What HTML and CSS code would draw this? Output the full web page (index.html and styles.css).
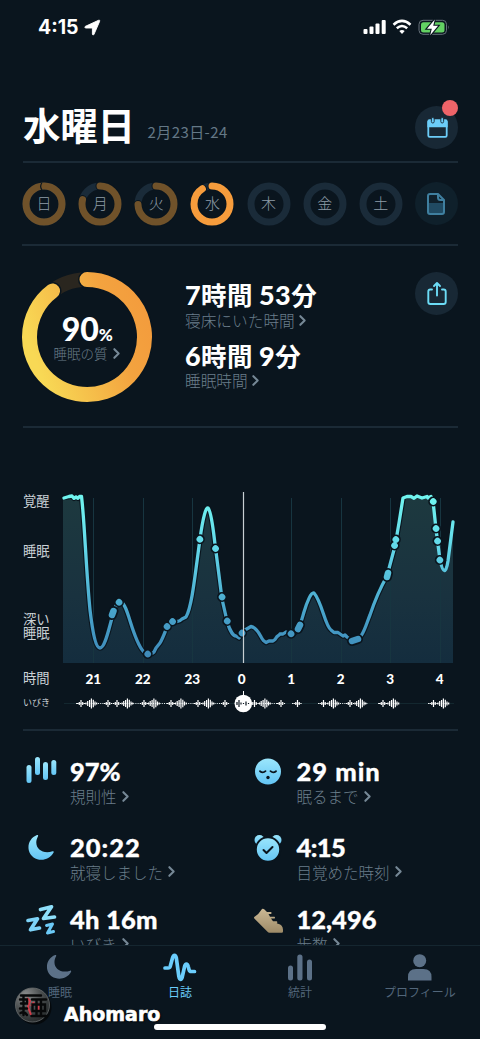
FILE: index.html
```html
<!DOCTYPE html>
<html lang="ja">
<head>
<meta charset="utf-8">
<title>睡眠日誌</title>
<link rel="stylesheet" href="styles.css">
</head>
<body>
<svg class="defs" width="0" height="0" aria-hidden="true">
  <defs>
    <linearGradient id="sky" x1="0" y1="0" x2="0" y2="1"><stop offset="0" stop-color="#9be6fc"/><stop offset="1" stop-color="#63c5f5"/></linearGradient>
    <linearGradient id="tan" x1="0" y1="0" x2="0" y2="1"><stop offset="0" stop-color="#cbb894"/><stop offset="1" stop-color="#9e8b68"/></linearGradient>
    <symbol id="chev" viewBox="0 0 8 12"><path d="M2 2l4 4-4 4" fill="none" stroke="#768896" stroke-width="1.9" stroke-linecap="round" stroke-linejoin="round"/></symbol>
    <symbol id="moon" viewBox="0 0 26 26"><path d="M9 0C2.600 2.500-.8 9 .9 15.700c2.600 10.300 18.500 13 24.700 1.800.5-1-.2-1.600-1-1.200C13 20 4.500 11.500 10 1.200 10.400.4 9.900-.3 9 0z"/></symbol>
  </defs>
</svg>
<div class="screen">
  <header class="status">
    <span class="clock">4:15</span>
    <svg class="loc" width="17" height="17" viewBox="0 0 17 17"><path d="M1.500 7.300L14.500 1.300c1-.4 1.500.1 1.100 1.100L10 15.300c-.5 1.100-1.600.8-1.600-.3V9H1.900C.7 9 .4 7.800 1.500 7.300z" fill="#fff" stroke="#fff" stroke-width=".9" stroke-linejoin="round"/></svg>
    <svg class="signal" width="88" height="20" viewBox="362 17 88 20">
      <g fill="#fff"><rect x="363.500" y="29" width="4" height="5" rx="1"/><rect x="369.500" y="26.500" width="4" height="7.500" rx="1"/><rect x="375.500" y="23.500" width="4" height="10.500" rx="1"/><rect x="381.700" y="20" width="4" height="14" rx="1"/></g>
      <g fill="none" stroke="#fff" stroke-width="2.500"><path d="M393.500 24.700q8.500-7.600 17 0"/><path d="M396.800 28.300q5.200-4.600 10.400 0"/></g>
      <path d="M399.300 31q2.700-2.200 5.400 0L402 34z" fill="#fff"/>
      <rect x="419" y="20.300" width="27.500" height="14" rx="4" fill="none" stroke="#66717a"/>
      <path d="M448 25.200v4.200q1.700-2.100 0-4.200" fill="#66717a"/>
      <rect x="421" y="22.200" width="23.500" height="10.200" rx="2.500" fill="#63d163"/>
      <path d="M434.800 19.500L427 28.700h4.800l-1.600 6.500 7.900-9.400h-4.900z" fill="#fff" stroke="#0a151e" stroke-width="2.200" paint-order="stroke"/>
    </svg>
  </header>

  <main class="content">
    <section class="title-row">
      <h1>水曜日</h1><span class="date">2月23日-24</span>
      <div class="round cal">
        <svg width="22" height="22" viewBox="425 116 22 22"><path d="M427.300 121.500h18.400v13q0 1.300-1.300 1.300h-15.800q-1.300 0-1.300-1.300z" fill="none" stroke="#6ccdf8" stroke-width="1.800"/><path d="M426.400 120.200q0-2 2-2h16.200q2 0 2 2v6h-20.200z" fill="#6ccdf8"/><g fill="#6ccdf8" stroke="#182835" stroke-width=".9"><rect x="430.400" y="116.500" width="2.800" height="5.500" rx="1.400"/><rect x="439.800" y="116.500" width="2.800" height="5.500" rx="1.400"/></g></svg>
        <i class="badge"></i>
      </div>
    </section>

    <section class="week">
      <div class="day past"><svg viewBox="0 0 44 44"><circle class="track" cx="22" cy="22" r="18"/><circle class="bar" cx="22" cy="22" r="18"/><path class="seam" d="M36 20q3.500-2.600 7-.2"/></svg><span>日</span></div>
      <div class="day past"><svg viewBox="0 0 44 44"><circle class="track" cx="22" cy="22" r="18"/><circle class="gap" pathLength="100" stroke-dasharray="79 100" cx="22" cy="22" r="18"/><circle class="bar" pathLength="100" stroke-dasharray="79 100" cx="22" cy="22" r="18"/></svg><span>月</span></div>
      <div class="day past"><svg viewBox="0 0 44 44"><circle class="track" cx="22" cy="22" r="18"/><circle class="gap" pathLength="100" stroke-dasharray="74.500 100" cx="22" cy="22" r="18"/><circle class="bar" pathLength="100" stroke-dasharray="74.500 100" cx="22" cy="22" r="18"/></svg><span>火</span></div>
      <div class="day now"><svg viewBox="0 0 44 44"><circle class="track" cx="22" cy="22" r="18"/><circle class="gap" pathLength="100" stroke-dasharray="91 100" cx="22" cy="22" r="18"/><circle class="bar" pathLength="100" stroke-dasharray="91 100" cx="22" cy="22" r="18"/></svg><span>水</span></div>
      <div class="day"><svg viewBox="0 0 44 44"><circle class="track" cx="22" cy="22" r="18"/></svg><span>木</span></div>
      <div class="day"><svg viewBox="0 0 44 44"><circle class="track" cx="22" cy="22" r="18"/></svg><span>金</span></div>
      <div class="day"><svg viewBox="0 0 44 44"><circle class="track" cx="22" cy="22" r="18"/></svg><span>土</span></div>
      <div class="round note"><svg width="20" height="24" viewBox="0 0 20 24"><path d="M2 11h16v9q0 2-2 2H4q-2 0-2-2z" fill="#204a62"/><path d="M4 2h8l6 6v12q0 2-2 2H4q-2 0-2-2V4q0-2 2-2zM12 2v3.500q0 2.500 2.500 2.500H18" fill="none" stroke="#3f7f9f" stroke-width="2" stroke-linejoin="round"/></svg></div>
    </section>

    <section class="summary">
      <div class="quality">
        <svg viewBox="0 0 132 132">
          <defs><linearGradient id="gold" x1="1" y1=".2" x2="0" y2=".55"><stop offset="0" stop-color="#f39c3d"/><stop offset=".3" stop-color="#f3a33f"/><stop offset="1" stop-color="#f8d955"/></linearGradient></defs>
          <circle cx="66" cy="66" r="57.500" fill="none" stroke="#2a261f" stroke-width="14.500"/>
          <path d="M66 8.500A57.500 57.500 0 1 1 31.500 20" fill="none" stroke="#0a151e" stroke-width="18" stroke-linecap="round"/>
          <path d="M66 8.500A57.500 57.500 0 1 1 31.500 20" fill="none" stroke="url(#gold)" stroke-width="15" stroke-linecap="round"/>
        </svg>
        <div class="q-text"><strong>90<small>%</small></strong><span>睡眠の質<svg class="chev"><use href="#chev"/></svg></span></div>
      </div>
      <div class="times">
        <strong><b>7</b>時間 <b>53</b>分</strong><span>寝床にいた時間<svg class="chev"><use href="#chev"/></svg></span>
        <strong><b>6</b>時間 <b>9</b>分</strong><span>睡眠時間<svg class="chev"><use href="#chev"/></svg></span>
      </div>
      <div class="round share"><svg width="24" height="28" viewBox="0 0 24 28"><path d="M7 9.500H5.300Q3.300 9.500 3.300 11.500v10.500q0 2 2 2h13.400q2 0 2-2V11.500q0-2-2-2H17M12 15.500V3.500M9 6l3-3 3 3" fill="none" stroke="#6cdcf6" stroke-width="1.900" stroke-linecap="round" stroke-linejoin="round"/></svg></div>
    </section>

    <section class="chart">
      <div class="levels"><span>覚醒</span><span>睡眠</span><span class="deep"><i>深い</i><i>睡眠</i></span></div>
      <svg class="plot" viewBox="62 488 396 176">
        <defs>
          <linearGradient id="area" gradientUnits="userSpaceOnUse" x1="0" y1="497" x2="0" y2="663"><stop offset="0" stop-color="#1d393f"/><stop offset=".6" stop-color="#19323f"/><stop offset="1" stop-color="#142d3e"/></linearGradient>
          <linearGradient id="line" gradientUnits="userSpaceOnUse" x1="0" y1="497" x2="0" y2="660"><stop offset="0" stop-color="#70f4ef"/><stop offset=".3" stop-color="#63d9ea"/><stop offset=".7" stop-color="#48a4cb"/><stop offset="1" stop-color="#3e88b8"/></linearGradient>
        </defs>
        <path fill="url(#area)" d="M63 498L69 496.500 81 497C84 515 86 570 90 610C93 635 96 648 100 648C105 648 109 628 112 618C115 607 117 601 121 602C128 604 132 638 143 651C147 656 154 655 157 649C160 640 163 640 167 627C173 619 178 622 186 616C192 607 195 575 200 539C203 517 206 507 209 508C212 512 214 538 215.500 548L222 599 227 621C230 632 234 637 239 638L245 629 251 626C258 627 261 642 268 642C278 640 277 634 286 632L292 634C299 632 301 622 304 612C307 602 311 592 315 594C323 602 325 632 333 632C340 631 345 637 352 641C363 640 365 627 370 615C375 600 380 592 387 576L395 546 399 523 404 497H432L436 529 440 560C443 574 446 574 448 561L453 522V663H63z"/>
        <g stroke="#173540" stroke-width="1"><path d="M93.500 498v165M143.500 498v165M192.500 498v165M291.500 498v165M341.500 498v165M390.500 498v165M440.500 498v165"/></g>
        <path fill="none" stroke="#0a151e" stroke-width="5.500" stroke-linejoin="round" d="M63 497.500L69 496.500 72 496 74 498.300 76 497 78 498.300 79.500 496.500H81.500C84.500 520 86 570 90 610C93 635 96 648 100 648C105 648 109 628 112 618C115 607 117 601 121 602C128 604 132 638 143 651C147 656 151 655 154 652L156 648 160 643C163 638 165 632 167 627C173 619 178 624 182 619L186 617C192 607 195 575 200 539C203 517 206 507 208 508C212 512 214 538 215.500 548L222 599 227 621C230 632 234 636 236 636L239 638L245 630 251 626.500C258 627 261 639 264 641L266 642.500 269 641 273 641 275 639.500C278 634 279 636 280 634L283 634 286 632 292 634C299 632 301 622 304 612C307 602 311 592 314 593C322 602 325 626 331 630L334 632.500H338L343 636 345 635 347 637 352 641C363 640 365 627 370 615C375 600 378 592 387 576L395 546 399 523 403 498"/>
        <path fill="none" stroke="url(#line)" stroke-width="3.300" stroke-linejoin="round" stroke-linecap="round" d="M64 498L69 496.500 72 496 74 498.300 76 497 78 498.300 79.500 496.500H81.500C84.500 520 86 570 90 610C93 635 96 648 100 648C105 648 109 628 112 618C115 607 117 601 121 602C128 604 132 638 143 651C147 656 151 655 154 652L156 648 160 643C163 638 165 632 167 627C173 619 178 624 182 619L186 617C192 607 195 575 200 539C203 517 206 507 208 508C212 512 214 538 215.500 548L222 599 227 621C230 632 234 636 236 636L239 638L245 630 251 626.500C258 627 261 639 264 641L266 642.500 269 641 273 641 275 639.500C278 634 279 636 280 634L283 634 286 632 292 634C299 632 301 622 304 612C307 602 311 592 314 593C322 602 325 626 331 630L334 632.500H338L343 636 345 635 347 637 352 641C363 640 365 627 370 615C375 600 378 592 387 576L395 546 399 523 403 498 407 496.500 411 496.500 414 498.300 417 496 422 498 427 496.500 428 498 431 496.500 433 501 436 529 437.500 541 440 560C443 574 446 574 448 561L453 522"/>
        <g fill="none" stroke-linecap="round">
          <path stroke="#0a151e" stroke-width="10" d="M112 615l1.500-4M119 602.300h.01M147.700 654h.01M167 626.500h.01M172.500 621.500h.01M199.800 539.300h.01M215.500 548.500h.01M222 597h.01M227.200 621h.01M242 633h.01M291 633.800h.01M298 629l2-4M352 641l6-2M387 577l1-4M394.500 545.500h.01M395.800 539.500h.01M433.200 501.500h.01M436 528.500h.01M437.500 541h.01M439.800 560h.01"/>
          <path stroke="url(#line)" stroke-width="6.500" d="M112 615l1.500-4M119 602.300l.1.100M147.700 654l.1.100M167 626.500l.1.100M172.500 621.500l.1.100M199.800 539.300l.1.100M215.500 548.500l.1.100M222 597l.1.100M227.200 621l.1.100M242 633l.1.100M291 633.800l.1.100M298 629l2-4M352 641l6-2M387 577l1-4M394.500 545.500l.1.100M395.800 539.500l.1.100M433.200 501.500l.1.100M436 528.500l.1.100M437.500 541l.1.100M439.800 560l.1.100"/>
        </g>
        <path d="M243.500 492v171" stroke="#c8cfd3" stroke-width="1.200"/>
      </svg>
      <span class="axis">時間</span>
      <div class="hours"><b>21</b><b>22</b><b>23</b><b>0</b><b>1</b><b>2</b><b>3</b><b>4</b></div>
      <span class="axis snore">いびき</span>
      <svg class="wave" viewBox="62 690 396 26">
        <defs>
          <path id="sm" d="M-3.500-.5v1M-1.700-1.500v3M0-3.500v7M1.700-1.500v3M3.500-.5v1" stroke-width="1.200"/>
          <path id="lg" d="M-5-1v2M-3.300-2.500v5M-1.400-3.500v7M.4-5v10M2.300-3.800v7.600M4-2v4M5.700-1v2" stroke-width="1.200"/>
        </defs>
        <path d="M64 703.500h390" stroke="#13272f"/>
        <g stroke="#e5e9eb" stroke-dasharray="1 1.200"><path d="M76 703.500h152M254 703.500h28M292 703.500h9M318 703.500h50M378 703.500h20M428 703.500h22"/></g>
        <g stroke="#fff">
          <use href="#sm" x="81" y="703.500"/><use href="#lg" x="91" y="703.500"/><use href="#sm" x="108" y="703.500"/><use href="#sm" x="117" y="703.500"/><use href="#lg" x="127" y="703.500"/><use href="#sm" x="144" y="703.500"/><use href="#lg" x="153.500" y="703.500"/><use href="#sm" x="171" y="703.500"/><use href="#lg" x="180.500" y="703.500"/><use href="#sm" x="198" y="703.500"/><use href="#lg" x="208" y="703.500"/><use href="#sm" x="225" y="703.500"/>
          <use href="#sm" x="254.500" y="703.500"/><use href="#lg" x="264.500" y="703.500"/><use href="#sm" x="281" y="703.500"/><use href="#sm" x="297.500" y="703.500"/><use href="#sm" x="323.500" y="703.500"/><use href="#lg" x="333" y="703.500"/><use href="#sm" x="350" y="703.500"/><use href="#lg" x="360" y="703.500"/><use href="#sm" x="383" y="703.500"/><use href="#lg" x="393" y="703.500"/><use href="#sm" x="433.500" y="703.500"/><use href="#lg" x="443" y="703.500"/>
        </g>
        <path d="M243.500 691v6" stroke="#fff"/><circle cx="243.300" cy="703.500" r="8.800" fill="#fff"/>
        <g stroke="#0a151e" stroke-width="1.200"><path d="M237 702v3M239 700v7M241 702.500v2M243.500 703v1M246 701.500v4M248.500 703v1"/></g>
      </svg>
    </section>

    <section class="stats">
      <div class="stat"><svg width="36" height="32" viewBox="23 756 36 32"><g fill="url(#sky)"><rect x="26.500" y="766" width="5" height="18" rx="2.500"/><rect x="35" y="758" width="5" height="18" rx="2.500"/><rect x="43" y="763" width="5" height="18" rx="2.500"/><rect x="51.300" y="761" width="5" height="15" rx="2.500"/></g></svg><div><strong>97%</strong><span>規則性<svg class="chev"><use href="#chev"/></svg></span></div></div>
      <div class="stat"><svg width="36" height="32" viewBox="-18 -16 36 32"><circle r="13" cy="0.500" fill="url(#sky)"/><path d="M-8 .2q2.800 2.400 5.500 0M2.500 .2q2.700 2.400 5.500 0" fill="none" stroke="#0a151e" stroke-width="1.800" stroke-linecap="round"/><circle cy="6.500" r="1.700" fill="#0a151e"/></svg><div><strong class="wide">29 min</strong><span>眠るまで<svg class="chev"><use href="#chev"/></svg></span></div></div>
      <div class="stat"><svg width="36" height="32" viewBox="0 0 36 32"><use href="#moon" x="5" y="4" width="26" height="26" fill="url(#sky)"/></svg><div><strong class="wide">20:22</strong><span>就寝しました<svg class="chev"><use href="#chev"/></svg></span></div></div>
      <div class="stat"><svg width="36" height="32" viewBox="-18 -17 36 32"><circle cx="-8.500" cy="-8" r="5" fill="url(#sky)"/><circle cx="8.500" cy="-8" r="5" fill="url(#sky)"/><circle cy="1.500" r="12.200" fill="url(#sky)" stroke="#0a151e" stroke-width="2"/><path d="M-4.500 2L-1.500 5l6-6" fill="none" stroke="#0a151e" stroke-width="2" stroke-linecap="round" stroke-linejoin="round"/></svg><div><strong class="tight">4:15</strong><span>目覚めた時刻<svg class="chev"><use href="#chev"/></svg></span></div></div>
      <div class="stat last"><svg width="36" height="32" viewBox="23 904 36 32"><g fill="none" stroke="#7dd3f8" stroke-width="3.700" stroke-linecap="round" stroke-linejoin="round"><path d="M40.500 909.500L51.500 906.800 43.500 918.500 54.500 917" stroke="#8edffa"/><path d="M28 920.500L37.500 918.800 30.500 929.800 39.500 928"/><path d="M46.500 925.500L52.500 924 47.500 933 53.500 931.500" stroke-width="3" stroke="#6bc9f6"/></g></svg><div><strong class="mid">4h 16m</strong><span>いびき<svg class="chev"><use href="#chev"/></svg></span></div></div>
      <div class="stat last"><svg width="36" height="32" viewBox="250 904 36 32"><path d="M254.300 916.500Q259 913.500 262 908.500q1.200-.6 2.500.6l2.500 2.400h4q1.200 1.200 0 2h-2.500l1.500 2.700h4.500q1 1.100 0 1.900H271l2 2.600h3.700q1.300 1 0 2l1.300.6q4.800 1 5 6v1.700q0 1.200-1.300 1.200H269.500q-1.200 0-2-.9l-12.700-12.800q-1.400-1-.5-2z" transform="translate(0 .5)" fill="url(#tan)"/></svg><div><strong>12,496</strong><span>歩数<svg class="chev"><use href="#chev"/></svg></span></div></div>
    </section>
  </main>

  <nav class="tabs">
    <div class="tab"><svg width="36" height="30" viewBox="0 0 36 30" fill="#5c7188"><use href="#moon" x="4.500" y="2" width="25" height="25"/></svg><span>睡眠</span></div>
    <div class="tab on"><svg width="36" height="30" viewBox="162 953 36 30"><path d="M165 968h3q1.700 0 2.200-1.500L172.500 958q.8-2.700 2-2.700t1.800 2.500l2.500 18.500q.5 3 1.700 3t1.800-2.500l2.200-10q.7-2.800 1.900-2.800t1.800 2.500l.8 3q.5 2 2.300 2H194.500" fill="none" stroke="#6bcdfc" stroke-width="3.700" stroke-linecap="round" stroke-linejoin="round"/></svg><span>日誌</span></div>
    <div class="tab"><svg width="36" height="30" viewBox="282 953 36 30" fill="#5c7188"><rect x="288" y="965.500" width="5" height="15" rx="2.500"/><rect x="297.300" y="954.500" width="5.200" height="26" rx="2.500"/><rect x="307" y="959.500" width="5" height="21" rx="2.500"/></svg><span>統計</span></div>
    <div class="tab"><svg width="36" height="30" viewBox="402 953 36 30" fill="#5c7188"><circle cx="419.700" cy="960.700" r="6.500"/><path d="M408 980.500V977q0-8 8-8h7.500q8 0 8 8v3.500z"/></svg><span>プロフィール</span></div>
    <i class="home"></i>
    <div class="owner">
      <svg width="40" height="40" viewBox="0 0 40 40"><defs><radialGradient id="disc" cx=".3" cy=".2" r=".9"><stop offset="0" stop-color="#8b8d8d"/><stop offset=".5" stop-color="#4a4e4f"/><stop offset="1" stop-color="#232728"/></radialGradient></defs><circle cx="21.500" cy="21.500" r="17" fill="#05090c"/><circle cx="19.500" cy="19" r="17" fill="url(#disc)" stroke="#686c6d" stroke-width=".8"/><path d="M14 12l3 3-2 6 3 8M18 20l3-4M25.500 17v9" fill="none" stroke="#d53a48" stroke-width="2"/><g fill="none" stroke="#070809" stroke-width="2.400" stroke-linecap="round"><path d="M8 9.500h20M7 13.500h7v4H8M10.500 10v9M7 22.500h7M10.500 20v9M7.500 27q4-2 6.500 2"/><path d="M19 13.500h14M19.500 18.500h12.500v6.500H19.500zM23.500 14v15M28 14v15M18.500 30h15"/></g></svg>
      <b>Ahomaro</b>
    </div>
  </nav>
</div>
</body>
</html>
```

FILE: styles.css
```css
* { box-sizing: border-box; }
body { margin: 0; background: #0a151e; font-family: "Noto Sans CJK JP", sans-serif; color: #fff; }
.defs { position: absolute; }
.screen { width: 480px; height: 1039px; display: flex; flex-direction: column; overflow: hidden; background: #0a151e; }
svg { display: block; flex: none; }
i { font-style: normal; }
.status { height: 54px; flex: none; display: flex; align-items: center; padding: 0 30px 0 38px; }
.clock { font: 700 19.500px/20px Inter, sans-serif; width: 42px; }
.loc { margin-left: 4px; }
.signal { margin-left: auto; }
.content { height: 891px; flex: none; overflow: hidden; padding: 0 22px 0 23px; }
.content > section:not(.stats) { border-bottom: 2px solid #1b2a36; }

.title-row { height: 109px; display: flex; align-items: flex-start; padding-top: 42px; }
h1 { margin: 0; font-size: 37.500px; line-height: 56px; font-weight: 700; letter-spacing: -.3px; }
.date { margin: 21px 0 0 13px; font-size: 15px; line-height: 30px; letter-spacing: .4px; color: #647886; }
.round { width: 43px; height: 43px; border-radius: 50%; background: #182835; display: flex; align-items: center; justify-content: center; flex: none; }
.cal { position: relative; margin: 10px 0 0 auto; }
.badge { position: absolute; right: 0; top: -6px; width: 16px; height: 16px; border-radius: 50%; background: #ee6469; }

.week { height: 83px; display: flex; justify-content: space-between; align-items: center; margin-left: -1px; }
.day { width: 44px; height: 44px; display: grid; place-items: center; }
.day > * { grid-area: 1 / 1; }
.day svg { width: 44px; height: 44px; transform: rotate(-90deg); }
.day circle { fill: none; stroke-width: 7; stroke-linecap: round; }
.day .track { stroke: #1a2b39; }
.day .gap { stroke: #0a151e; stroke-width: 9; }
.seam { fill: none; stroke: #0a151e; stroke-width: 1.200; }
.past .bar { stroke: #70522a; }
.now .bar { stroke: #f69c3c; }
.day span { font-size: 15px; line-height: 20px; font-weight: 300; color: #8e9da8; padding-bottom: 1px; }
.note { background: #0f202b; }

.summary { height: 182px; display: flex; align-items: flex-start; padding-top: 25px; }
.quality { width: 132px; height: 132px; margin-left: -2px; display: grid; place-items: center; }
.quality > * { grid-area: 1 / 1; }
.q-text { display: flex; flex-direction: column; align-items: center; padding-top: 1px; }
.q-text strong { font: 900 32px/30px Lato, sans-serif; height: 31px; }
.q-text small { font-size: 17px; letter-spacing: -.5px; }
.q-text span { display: flex; align-items: center; gap: 4px; font-size: 13.500px; line-height: 16px; color: #6b7e8b; font-weight: 300; }
.chev { width: 9px; height: 13px; }
.times { margin-left: 32px; padding-top: 8px; }
.times strong { display: block; font-size: 25.500px; line-height: 30px; height: 31px; font-weight: 700; letter-spacing: .4px; }
.times b { font: 900 27px/30px Lato, sans-serif; }
.times span { display: flex; align-items: center; gap: 3px; font-size: 15.700px; line-height: 19px; height: 20px; margin-bottom: 9.500px; color: #6b7e8b; font-weight: 300; }
.share { margin-left: auto; margin-top: 1px; }

.chart { height: 303px; display: grid; grid-template-columns: 39px 396px; grid-template-rows: 176px 26px 26px; padding-top: 60px; }
.levels { display: flex; flex-direction: column; font-size: 13.300px; line-height: 14px; color: #cbd2d7; padding-top: 6px; }
.levels span:nth-child(2) { margin-top: 36px; }
.levels .deep { margin-top: 54px; display: flex; flex-direction: column; }
.plot { width: 396px; height: 176px; }
.axis { font-size: 13.300px; line-height: 28px; color: #cbd2d7; }
.snore { font-size: 9px; line-height: 26px; }
.hours { display: grid; grid-template-columns: repeat(8, 49.500px); padding-left: 6.500px; text-align: center; font: 700 13.500px/30px Lato, sans-serif; }
.wave { width: 396px; height: 26px; }

.stats { display: grid; grid-template-columns: 226.500px 1fr; grid-template-rows: 75.500px 73px 73px; padding-top: 24px; }
.stat { display: flex; align-items: flex-start; gap: 11px; }
.stat strong { display: block; font: 900 25.500px/33px Lato, sans-serif; height: 32px; -webkit-text-stroke: .3px #fff; }
.stat .wide { letter-spacing: 1px; }
.stat .mid { letter-spacing: .2px; }
.stat .tight { letter-spacing: -.6px; }
.stat div span { display: flex; align-items: center; gap: 4px; font-size: 15.500px; line-height: 18px; color: #6b7e8b; font-weight: 300; }
.last div { margin-top: -1px; }

.tabs { position: relative; height: 94px; flex: none; display: grid; grid-template-columns: repeat(4, 120px); border-top: 1px solid #152630; padding-top: 7px; }
.tab { display: flex; flex-direction: column; align-items: center; font-size: 12px; line-height: 18px; color: #52667a; }
.on { color: #6bcdfc; }
.home { position: absolute; left: 154px; bottom: 9px; width: 172px; height: 6px; border-radius: 3px; background: #fff; }
.owner { position: absolute; left: 13px; top: 40px; display: flex; align-items: center; }
.owner b { margin: 15px 0 0 11px; font: 700 19px/24px "DejaVu Sans", sans-serif; -webkit-text-stroke: .6px #fff; text-shadow: 1px 1px 2px #000; }
```
